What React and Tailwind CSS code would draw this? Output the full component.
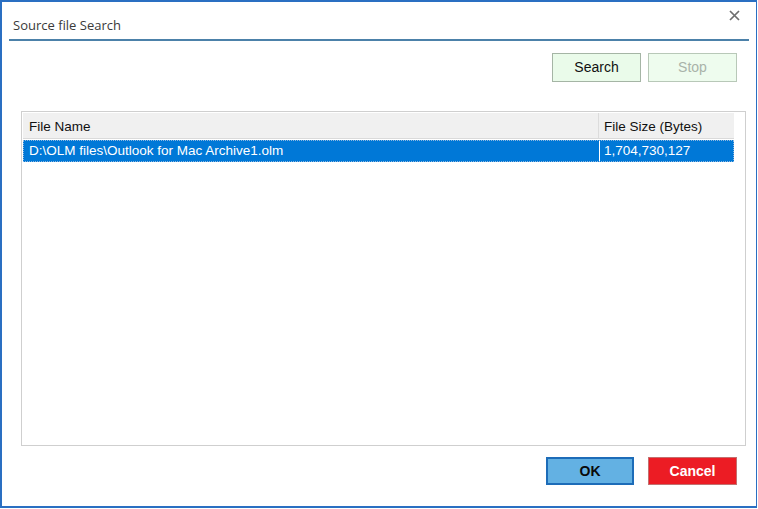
import React from 'react';

const App = () => {
    return (
        <div className="w-[758px] h-[509px] bg-white overflow-hidden">
            {/* Window */}
            <div className="w-[757px] h-[508px] border-2 border-r-[1.5px] border-[#2a6fc2] bg-white flex flex-col">
                {/* Title bar */}
                <div className="h-[37px] flex items-end justify-between pl-[11px] pr-[16px] shrink-0">
                    <span className="text-[13px] text-[#3a3a3a] leading-[20px] mb-[4px]" style={{ fontFamily: '"Open Sans", "Noto Sans", sans-serif' }}>
                        Source file Search
                    </span>
                    <svg width="11" height="11" viewBox="0 0 11 11" className="mb-[18px]">
                        <path d="M1 1 L10 10 M10 1 L1 10" stroke="#6e6e6e" strokeWidth="1.7" />
                    </svg>
                </div>
                <div className="mx-[7px] h-[2px] bg-[#4c81a9] shrink-0" />

                {/* Search / Stop */}
                <div className="flex justify-end gap-[7px] pr-[19px] mt-[12px] shrink-0" style={{ fontFamily: '"Liberation Sans", Arial, sans-serif' }}>
                    <button className="w-[89px] h-[29px] bg-[#eafbea] border border-[#a5b5a5] text-[14px] text-[#111]">Search</button>
                    <button className="w-[89px] h-[29px] bg-[#eefcee] border border-[#b8c8b8] text-[14px] text-[#a9b3a9]">Stop</button>
                </div>

                {/* Table */}
                <div className="ml-[19px] mr-[10px] mt-[29px] h-[335px] border border-[#cfcfcf] bg-white p-px shrink-0" style={{ fontFamily: '"Liberation Sans", Arial, sans-serif' }}>
                    <div className="flex h-[26px] w-[711px] bg-[#f0f0f0] border-b border-[#dadada] text-[13.5px] text-[#111]">
                        <div className="w-[576px] border-r border-[#dcdcdc] pl-[6px] pt-[3px] flex items-center">File Name</div>
                        <div className="flex-1 pl-[5px] pt-[3px] flex items-center">File Size (Bytes)</div>
                    </div>
                    <div className="flex h-[22px] w-[711px] mt-px bg-[#0078d7] border border-dotted border-[#8fb8e0] text-[13.5px] text-white">
                        <div className="w-[576px] border-r border-white pl-[5px] flex items-center">D:\OLM files\Outlook for Mac Archive1.olm</div>
                        <div className="flex-1 pl-[4px] flex items-center">1,704,730,127</div>
                    </div>
                </div>

                {/* OK / Cancel */}
                <div className="flex justify-end gap-[14px] pr-[19px] mt-[11px] shrink-0" style={{ fontFamily: '"Liberation Sans", Arial, sans-serif' }}>
                    <button className="w-[88px] h-[28px] bg-[#63b1e3] border-2 border-[#1d6cb8] text-[14px] font-bold text-[#0a0a0a]">OK</button>
                    <button className="w-[89px] h-[28px] bg-[#ec1c24] border border-[#c2706f] text-[14px] font-bold text-white">Cancel</button>
                </div>
            </div>
        </div>
    );
};

export default App;
